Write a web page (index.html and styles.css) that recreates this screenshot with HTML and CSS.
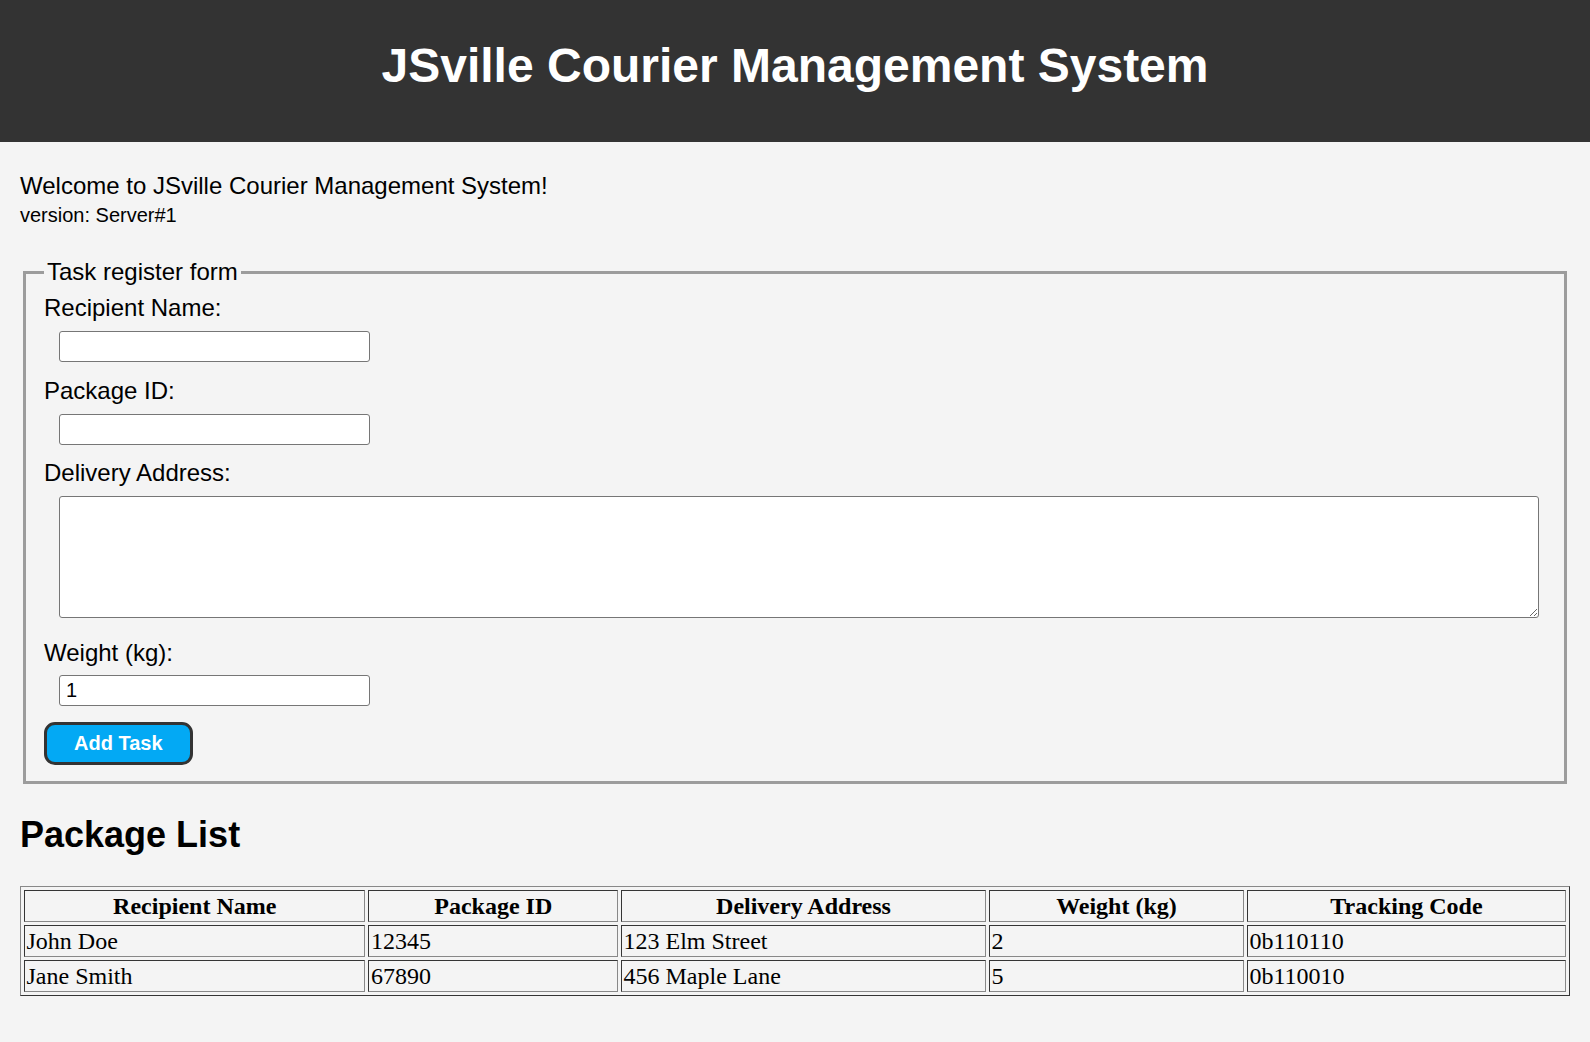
FILE: index.html
```html
<!DOCTYPE html>
<html lang="en">
<head>
<meta charset="utf-8">
<title>JSville Courier Management System</title>
<link rel="stylesheet" href="styles.css">
</head>
<body>
<header class="site-header">
  <h1 class="site-title">JSville Courier Management System</h1>
</header>
<main class="content">
  <p class="welcome">Welcome to JSville Courier Management System!</p>
  <p class="version">version: Server#1</p>

  <fieldset class="task-form">
    <legend class="task-legend">Task register form</legend>
    <label class="field-label" for="recipient">Recipient Name:</label>
    <input class="field-input" id="recipient" type="text">
    <label class="field-label" for="package">Package ID:</label>
    <input class="field-input" id="package" type="text">
    <label class="field-label" for="address">Delivery Address:</label>
    <textarea class="field-textarea" id="address"></textarea>
    <label class="field-label" for="weight">Weight (kg):</label>
    <input class="field-input field-input-last" id="weight" type="text" inputmode="numeric" value="1">
    <button class="add-btn" type="button">Add Task</button>
  </fieldset>

  <h2 class="section-title">Package List</h2>

  <table class="package-table">
    <thead>
      <tr>
        <th>Recipient Name</th>
        <th>Package ID</th>
        <th>Delivery Address</th>
        <th>Weight (kg)</th>
        <th>Tracking Code</th>
      </tr>
    </thead>
    <tbody>
      <tr>
        <td>John Doe</td>
        <td>12345</td>
        <td>123 Elm Street</td>
        <td>2</td>
        <td>0b110110</td>
      </tr>
      <tr>
        <td>Jane Smith</td>
        <td>67890</td>
        <td>456 Maple Lane</td>
        <td>5</td>
        <td>0b110010</td>
      </tr>
    </tbody>
  </table>
</main>
</body>
</html>
```

FILE: styles.css
```css
html, body {
  margin: 0;
  padding: 0;
}

body {
  background: #f4f4f4;
  color: #000;
  font-family: "Liberation Sans", Arial, sans-serif;
}

.site-header {
  background: #333333;
  color: #ffffff;
  height: 142px;
  box-sizing: border-box;
  padding-top: 38px;
}

.site-title {
  margin: 0;
  text-align: center;
  font-size: 48px;
  line-height: 55px;
  font-weight: bold;
}

.content {
  padding: 0 20px 40px;
}

.welcome {
  margin: 30px 0 0;
  font-size: 24px;
  line-height: 28px;
}

.version {
  margin: 4px 0 0;
  font-size: 20px;
  line-height: 23px;
}

.task-form {
  margin: 31px 3px 0;
  border: 3px solid #9c9c9c;
  padding: 8px 18px 16px;
  min-width: 0;
}

.task-legend {
  padding: 0 3px;
  font-size: 24px;
  line-height: 28px;
}

.field-label {
  display: block;
  font-size: 24px;
  line-height: 28px;
}

.field-input {
  display: block;
  box-sizing: border-box;
  width: 311px;
  height: 31px;
  margin: 9px 0 14.5px 15px;
  padding: 0 6px;
  border: 1px solid #767676;
  border-radius: 3px;
  background: #ffffff;
  font-family: "Liberation Sans", Arial, sans-serif;
  font-size: 20px;
  color: #000;
}

.field-input-last {
  margin-top: 7.5px;
  margin-bottom: 0;
}

.field-textarea {
  display: block;
  box-sizing: border-box;
  width: calc(100% - 22px);
  height: 122px;
  margin: 9px 0 21px 15px;
  border: 1px solid #767676;
  border-radius: 3px;
  background: #ffffff;
  font-family: "Liberation Mono", monospace;
  font-size: 20px;
}

.add-btn {
  display: block;
  box-sizing: border-box;
  height: 43px;
  margin-top: 16px;
  padding: 0 27px;
  border: 3px solid #333333;
  border-radius: 11px;
  background: #03a9f4;
  color: #ffffff;
  font-family: "Liberation Sans", Arial, sans-serif;
  font-size: 20px;
  font-weight: bold;
  line-height: 37px;
}

.section-title {
  margin: 30px 0 31px;
  font-size: 36px;
  line-height: 41px;
  font-weight: bold;
}

.package-table {
  width: 100%;
  border-collapse: separate;
  border-spacing: 3px;
  border: 1px solid;
  border-color: #888888 #353535 #353535 #888888;
  font-family: "Liberation Serif", "Times New Roman", serif;
  font-size: 24px;
}

.package-table th,
.package-table td {
  border: 1px solid;
  border-color: #353535 #888888 #888888 #353535;
  padding: 1px 1.5px;
  line-height: 28px;
}

.package-table th {
  font-weight: bold;
  text-align: center;
}

.package-table td {
  text-align: left;
}
```
